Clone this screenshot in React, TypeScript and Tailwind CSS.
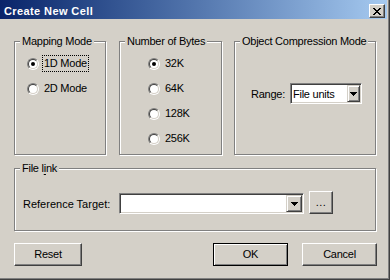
import React from 'react';

// Classic Windows dialog: raised / sunken / etched edges as border + inset shadow pairs.
const raised =
  'border border-t-white border-l-white border-r-[#404040] border-b-[#404040] bg-[#d4d0c8] shadow-[inset_-1px_-1px_0_#808080]';
const arrowFace =
  'border border-t-[#d4d0c8] border-l-[#d4d0c8] border-r-[#404040] border-b-[#404040] bg-[#d4d0c8] shadow-[inset_1px_1px_0_#fff,inset_-1px_-1px_0_#808080]';
const sunken =
  'border border-t-[#808080] border-l-[#808080] border-r-white border-b-white bg-white shadow-[inset_1px_1px_0_#404040,inset_-1px_-1px_0_#d4d0c8]';
const etched = 'relative border border-[#808080] shadow-[inset_1px_1px_0_#fff,1px_1px_0_#fff]';

function Arrow() {
  return (
    <svg width="7" height="4" viewBox="0 0 7 4" shapeRendering="crispEdges" aria-hidden="true">
      <path d="M0 0h7v1H0zM1 1h5v1H1zM2 2h3v1H2zM3 3h1v1H3z" fill="#000" />
    </svg>
  );
}

function CloseGlyph() {
  return (
    <svg width="8" height="7" viewBox="0 0 8 7" shapeRendering="crispEdges" aria-hidden="true">
      <path
        d="M0 0h2v1H0zM6 0h2v1H6zM1 1h2v1H1zM5 1h2v1H5zM2 2h4v1H2zM3 3h2v1H3zM2 4h4v1H2zM1 5h2v1H1zM5 5h2v1H5zM0 6h2v1H0zM6 6h2v1H6z"
        fill="#000"
      />
    </svg>
  );
}

function Legend({ children }: { children: React.ReactNode }) {
  return <span className="absolute left-[5px] top-[-7px] bg-[#d4d0c8] px-[2px]">{children}</span>;
}

function Radio({ label, checked, focused }: { label: string; checked?: boolean; focused?: boolean }) {
  return (
    <div className="flex h-[17px] items-center">
      <span className="relative size-[12px] shrink-0 rounded-full border border-t-[#808080] border-l-[#808080] border-r-white border-b-white">
        <span className="absolute inset-0 rounded-full border border-t-[#404040] border-l-[#404040] border-r-[#d4d0c8] border-b-[#d4d0c8] bg-white">
          {checked ? <span className="absolute left-[2px] top-[2px] size-[4px] rounded-full bg-black" /> : null}
        </span>
      </span>
      <span
        className={`ml-[3px] border p-[1px] ${focused ? 'border-dotted border-black' : 'border-transparent'}`}
      >
        {label}
      </span>
    </div>
  );
}

function Combo({ width, arrowWidth, text }: { width: string; arrowWidth: string; text?: string }) {
  return (
    <div className={`flex h-[21px] shrink-0 p-[1px] ${width} ${sunken}`}>
      <span className="flex-1 whitespace-nowrap pl-[1px] pt-[3px]">{text}</span>
      <span className={`flex h-[17px] items-center justify-center ${arrowWidth} ${arrowFace}`}>
        <Arrow />
      </span>
    </div>
  );
}

export default function App() {
  return (
    <div className="h-[280px] w-[390px] overflow-hidden border-r border-b border-[#404040] bg-[#d4d0c8] font-['Liberation_Sans',Arial,sans-serif] text-[11px] leading-[13px] tracking-[-0.25px] text-black shadow-[inset_-1px_-1px_0_#808080]">
      {/* Title bar */}
      <div className="flex h-[19px] w-[387px] items-start bg-linear-to-r from-[#0a246a] to-[#a6caf0]">
        <span className="mr-auto pl-[4px] pt-[5px] font-bold tracking-[0.4px] text-white">Create New Cell</span>
        <span className={`mr-[2px] mt-[4px] flex h-[14px] w-[16px] items-center justify-center pt-[1px] ${raised}`}>
          <CloseGlyph />
        </span>
      </div>

      <div className="pl-[14px] pt-[22px]">
        <div className="flex items-start">
          <div className={`h-[114px] w-[92px] pl-[12px] pt-[13px] ${etched}`}>
            <Legend>Mapping Mode</Legend>
            <div className="flex flex-col gap-[8px]">
              <Radio label="1D Mode" checked focused />
              <Radio label="2D Mode" />
            </div>
          </div>

          <div className={`ml-[13px] h-[114px] w-[103px] pl-[28px] pt-[13px] ${etched}`}>
            <Legend>Number of Bytes</Legend>
            <div className="flex flex-col gap-[8px]">
              <Radio label="32K" checked />
              <Radio label="64K" />
              <Radio label="128K" />
              <Radio label="256K" />
            </div>
          </div>

          <div className={`ml-[12px] h-[114px] w-[142px] pl-[16px] pt-[41px] ${etched}`}>
            <Legend>Object Compression Mode</Legend>
            <div className="flex items-start">
              <span className="mt-[5px] w-[39px] shrink-0">Range:</span>
              <Combo width="w-[72px]" arrowWidth="w-[13px]" text="File units" />
            </div>
          </div>
        </div>

        <div className={`mt-[13px] h-[63px] w-[362px] pl-[8px] pt-[22px] ${etched}`}>
          <Legend>
            File l<span className="underline underline-offset-2">i</span>nk
          </Legend>
          <div className="flex items-start">
            <span className="mt-[7px] w-[96px] shrink-0 whitespace-nowrap tracking-normal">Reference Target:</span>
            <div className="mt-[2px]">
              <Combo width="w-[185px]" arrowWidth="w-[16px]" />
            </div>
            <span className={`ml-[5px] flex h-[23px] w-[24px] items-center justify-center tracking-[0.5px] ${raised}`}>
              ...
            </span>
          </div>
        </div>

        <div className="mt-[12px] flex w-[363px] items-start">
          <span className={`flex h-[23px] w-[68px] items-center justify-center ${raised}`}>Reset</span>
          <span className="flex-1" />
          <span className="flex h-[23px] w-[75px] items-center justify-center border border-black bg-[#d4d0c8] shadow-[inset_1px_1px_0_#fff,inset_-1px_-1px_0_#808080]">
            OK
          </span>
          <span className={`ml-[14px] flex h-[23px] w-[75px] items-center justify-center ${raised}`}>Cancel</span>
        </div>
      </div>
    </div>
  );
}
